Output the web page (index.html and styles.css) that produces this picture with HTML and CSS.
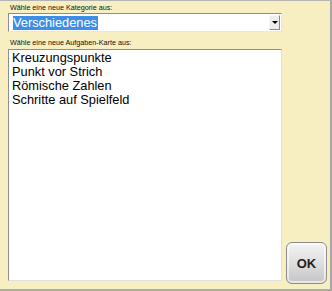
FILE: index.html
```html
<!DOCTYPE html>
<html>
	<head>
		<meta charset="utf-8">
		<title>Aufgaben-Karte</title>
		<link rel="stylesheet" href="styles.css">
	</head>
	<body>
	<div class="frame">
		<div class="left">
			<div class="label">Wähle eine neue Kategorie aus:</div>
			<div class="combo">
				<span class="combo-text">Verschiedenes</span>
				<span class="combo-btn"><i class="arrow"></i></span>
			</div>
			<div class="label label-list">Wähle eine neue Aufgaben-Karte aus:</div>
			<ul class="listbox">
				<li>Kreuzungspunkte</li>
				<li>Punkt vor Strich</li>
				<li>Römische Zahlen</li>
				<li>Schritte auf Spielfeld</li>
			</ul>
		</div>
		<div class="side">
			<a class="ok">OK</a>
		</div>
	</div>
	</body>
</html>
```
FILE: styles.css
```css
* {margin: 0;padding: 0;}
li{list-style: none;}
body {
	font-family: "Liberation Sans", Arial, sans-serif;
	color: #000;
}
.frame {
	width: 332px;
	height: 291px;
	box-sizing: border-box;
	background: #f7efc1;
	border-top: 1px solid #b4b4b4;
	border-right: 2px solid #a8a8a8;
	border-bottom: 2px solid #a8a8a8;
	padding: 2px 0 5px 8px;
	display: flex;
}
.left {
	width: 274px;
	display: flex;
	flex-direction: column;
}
.label {
	font-size: 7.2px;
	line-height: 10px;
	height: 10px;
	padding-left: 2px;
	color: #111;
}
.combo {
	height: 19px;
	box-sizing: border-box;
	background: #fff;
	border-top: 1px solid #8e8e8e;
	border-left: 1px solid #8e8e8e;
	border-right: 1px solid #e6e6e6;
	border-bottom: 1px solid #e6e6e6;
	display: flex;
	align-items: center;
	padding: 0 1px 0 4px;
}
.combo-text {
	flex: 1;
	font-size: 12.8px;
	line-height: 14px;
	background: linear-gradient(#3d8fe6, #3d8fe6) no-repeat 0 0 / 85px 14px;
	color: #fff;
}
.combo-btn {
	width: 11px;
	height: 15px;
	box-sizing: border-box;
	background: #ececec;
	border-top: 1px solid #f8f8f8;
	border-left: 1px solid #f8f8f8;
	border-right: 1px solid #8a8a8a;
	border-bottom: 1px solid #8a8a8a;
	display: flex;
	align-items: center;
	justify-content: center;
}
.arrow {
	width: 0;
	height: 0;
	border-left: 3px solid transparent;
	border-right: 3px solid transparent;
	border-top: 3px solid #000;
}
.label-list {
	margin-top: 6px;
}
.listbox {
	flex: 1;
	margin-top: 1px;
	margin-bottom: 3px;
	background: #fff;
	border-top: 1px solid #8e8e8e;
	border-left: 1px solid #8e8e8e;
	border-right: 1px solid #e0e0e0;
	border-bottom: 1px solid #e0e0e0;
	padding: 1px 3px;
	font-size: 12.8px;
	line-height: 14px;
}
.side {
	flex: 1;
	display: flex;
	align-items: flex-end;
}
.ok {
	width: 41px;
	height: 42px;
	box-sizing: border-box;
	margin-left: 4px;
	border: 1px solid #8c8c8c;
	border-radius: 6px;
	background: linear-gradient(#f4f4f4, #dcdcdc 55%, #c4c4c4);
	box-shadow: inset 0 0 0 2px rgba(255,255,255,0.6);
	display: flex;
	align-items: center;
	justify-content: center;
	font-weight: bold;
	font-size: 13px;
	color: #1e1e1e;
	cursor: pointer;
}
```
